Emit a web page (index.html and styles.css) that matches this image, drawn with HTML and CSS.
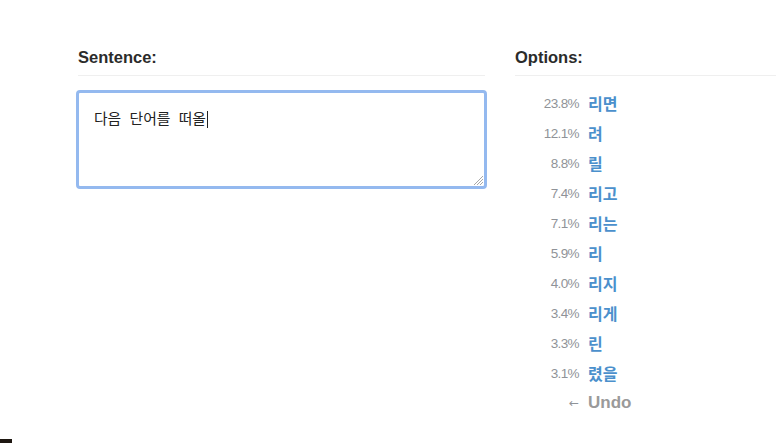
FILE: index.html
```html
<!DOCTYPE html>
<html lang="ko">
<head>
<meta charset="utf-8">
<title>Sentence</title>
<link rel="stylesheet" href="styles.css">
</head>
<body>
<div class="page">
  <section class="col-sentence">
    <h2 class="heading">Sentence:</h2>
    <div class="textarea">
      <span class="typed">다음&nbsp; 단어를&nbsp; 떠올</span><span class="caret"></span>
      <svg class="grip" width="10" height="10" viewBox="0 0 10 10"><path d="M10 1 L1 10 M10 4 L4 10 M10 7 L7 10" stroke="#a8a8a8" stroke-width="1"/></svg>
    </div>
  </section>
  <section class="col-options">
    <h2 class="heading">Options:</h2>
    <ul class="options">
      <li class="opt"><span class="pct">23.8%</span><span class="word">리면</span></li>
      <li class="opt"><span class="pct">12.1%</span><span class="word">려</span></li>
      <li class="opt"><span class="pct">8.8%</span><span class="word">릴</span></li>
      <li class="opt"><span class="pct">7.4%</span><span class="word">리고</span></li>
      <li class="opt"><span class="pct">7.1%</span><span class="word">리는</span></li>
      <li class="opt"><span class="pct">5.9%</span><span class="word">리</span></li>
      <li class="opt"><span class="pct">4.0%</span><span class="word">리지</span></li>
      <li class="opt"><span class="pct">3.4%</span><span class="word">리게</span></li>
      <li class="opt"><span class="pct">3.3%</span><span class="word">린</span></li>
      <li class="opt"><span class="pct">3.1%</span><span class="word">렸을</span></li>
      <li class="opt undo"><span class="pct arrow">←</span><span class="word">Undo</span></li>
    </ul>
  </section>
</div>
<div class="corner"></div>
</body>
</html>
```

FILE: styles.css
```css
html, body {
  margin: 0;
  padding: 0;
  background: #ffffff;
}
body {
  font-family: "Liberation Sans", "Noto Sans CJK KR", sans-serif;
  color: #2b2b2b;
  overflow: hidden;
}
.page {
  display: flex;
  gap: 30px;
  padding: 47px 0 0 78px;
}
.col-sentence {
  width: 407px;
  flex: none;
}
.col-options {
  flex: 1;
}
.heading {
  margin: 0;
  font-size: 16.5px;
  line-height: 20px;
  font-weight: bold;
  color: #2b2b2b;
  padding-bottom: 8px;
  border-bottom: 1px solid #efefef;
}
.textarea {
  position: relative;
  margin: 14px 0 0 -2px;
  width: 411px;
  height: 99px;
  box-sizing: border-box;
  border: 3px solid #94b9ef;
  border-radius: 4px;
  padding: 16px 15px;
  font-family: "Noto Sans CJK KR", "Liberation Sans", sans-serif;
  font-size: 14.8px;
  line-height: 18px;
  color: #222;
}
.caret {
  display: inline-block;
  width: 1px;
  height: 17px;
  background: #222;
  vertical-align: -4px;
  margin-left: 1px;
}
.grip {
  position: absolute;
  right: 1px;
  bottom: 1px;
}
.options {
  list-style: none;
  margin: 12px 0 0;
  padding: 0;
}
.opt {
  display: flex;
  align-items: center;
  height: 30px;
  gap: 9px;
}
.pct {
  width: 64px;
  text-align: right;
  font-size: 13.5px;
  letter-spacing: -0.6px;
  color: #8f9398;
}
.word {
  font-family: "Noto Sans CJK KR", "Liberation Sans", sans-serif;
  font-weight: bold;
  font-size: 16px;
  color: #4b90cc;
}
.undo .word {
  font-family: "Liberation Sans", sans-serif;
  font-size: 17px;
  color: #9a9a9a;
}
.arrow {
  font-family: "DejaVu Sans", sans-serif;
  font-size: 12px;
  letter-spacing: 0;
  line-height: 1;
  color: #8f9398;
}
.corner {
  position: fixed;
  left: 0;
  bottom: 0;
  width: 12px;
  height: 4px;
  background: #1e1711;
}
```
